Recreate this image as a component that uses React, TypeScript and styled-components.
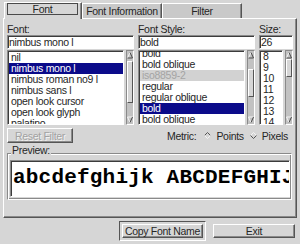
import styled, { createGlobalStyle } from 'styled-components';

const GlobalStyle = createGlobalStyle`
  html, body {
    margin: 0;
    padding: 0;
    background: #d6d6d6;
  }
  body {
    font-family: "Liberation Sans", Arial, sans-serif;
    font-size: 10.5px;
    letter-spacing: -0.3px;
    color: #262626;
  }
  * {
    box-sizing: border-box;
  }
`;

const Window = styled.div`
  width: 300px;
  height: 244px;
  display: flex;
  flex-direction: column;
  overflow: hidden;
`;

const TabBar = styled.div`
  display: flex;
  align-items: flex-end;
  height: 18px;
  padding-left: 4px;
  position: relative;
  z-index: 1;
`;

const Tab = styled.div<{ $active?: boolean; $width: number }>`
  display: flex;
  align-items: ${p => (p.$active ? 'flex-start' : 'center')};
  justify-content: center;
  width: ${p => p.$width}px;
  height: ${p => (p.$active ? 17 : 15)}px;
  margin-bottom: ${p => (p.$active ? -1 : 0)}px;
  padding: ${p => (p.$active ? '0 3px 0 2px' : '0')};
  background: ${p => (p.$active ? '#d6d6d6' : '#c9c9c9')};
  border-top: 1px solid #fff;
  border-left: 1px solid #fff;
  border-right: 1px solid #555;
  box-shadow: inset -1px 0 0 #8a8a8a;
  line-height: 12px;
  white-space: nowrap;
  overflow: hidden;
`;

const FocusBox = styled.div`
  flex: 1;
  height: 12px;
  border: 1px solid #4a4a4a;
  text-align: center;
  line-height: 10px;
`;

const Panel = styled.div`
  flex: none;
  height: 200px;
  margin: 0 3px;
  padding: 4px 3px 0 3px;
  border: 1px solid;
  border-color: #fff #555 #555 #fff;
  box-shadow: inset -1px -1px 0 #8a8a8a;
  display: flex;
  flex-direction: column;
`;

const Columns = styled.div`
  display: grid;
  grid-template-columns: 127px 117px 34px;
  column-gap: 4px;
`;

const Column = styled.div`
  display: flex;
  flex-direction: column;
`;

const Label = styled.div`
  height: 12px;
  line-height: 12px;
  white-space: nowrap;
`;

const Entry = styled.div`
  height: 14px;
  margin-bottom: 1px;
  padding: 0 1px;
  background: #fff;
  border: 1px solid;
  border-color: #8a8a8a #fff #fff #8a8a8a;
  box-shadow: inset 1px 1px 0 #3c3c3c;
  line-height: 12px;
  white-space: nowrap;
  overflow: hidden;
`;

const ListRow = styled.div`
  display: flex;
  gap: 2px;
  height: 75px;
`;

const ListView = styled.div`
  flex: 1;
  min-width: 0;
  background: #fff;
  border: 1px solid;
  border-color: #8a8a8a #fff #fff #8a8a8a;
  box-shadow: inset 1px 1px 0 #3c3c3c;
  padding: 1px 0 0 1px;
  overflow: hidden;
`;

const ListItems = styled.div<{ $offset: number }>`
  margin-top: ${p => p.$offset}px;
`;

const Item = styled.div<{ $selected?: boolean; $header?: boolean }>`
  height: 11px;
  line-height: 11px;
  padding-left: 2px;
  white-space: nowrap;
  background: ${p => (p.$selected ? '#0b0b8a' : p.$header ? '#d2d2d2' : 'transparent')};
  color: ${p => (p.$selected ? '#fff' : p.$header ? '#a4a4a4' : '#262626')};
`;

const ScrollTrack = styled.div`
  width: 8px;
  display: flex;
  flex-direction: column;
  background: #c2c2c2;
  border: 1px solid;
  border-color: #8a8a8a #fff #fff #8a8a8a;
`;

const Trough = styled.div`
  flex: 1;
`;

const Thumb = styled.div<{ $top: number; $height: number }>`
  margin-top: ${p => p.$top}px;
  height: ${p => p.$height}px;
  background: #d6d6d6;
  border: 1px solid;
  border-color: #fff #555 #555 #fff;
`;

const Arrow = styled.svg`
  display: block;
  flex: none;
  width: 6px;
  height: 8px;
`;

const ControlsRow = styled.div`
  display: flex;
  align-items: center;
  justify-content: space-between;
  height: 15px;
  margin-top: 3px;
  padding-right: 5px;
`;

const Button = styled.div<{ $disabled?: boolean; $width: number }>`
  width: ${p => p.$width}px;
  height: ${p => (p.$disabled ? 15 : 14)}px;
  display: flex;
  align-items: center;
  justify-content: center;
  background: #d6d6d6;
  border: 1px solid;
  border-color: #fff #555 #555 #fff;
  box-shadow: inset -1px -1px 0 #8a8a8a;
  color: ${p => (p.$disabled ? '#a2a2a2' : '#262626')};
  text-shadow: ${p => (p.$disabled ? '1px 1px 0 #f2f2f2' : 'none')};
  white-space: nowrap;
  overflow: hidden;
`;

const Metric = styled.div`
  display: flex;
  align-items: center;
  gap: 5px;
`;

const MetricLabel = styled.span`
  margin-right: 3px;
`;

const RadioText = styled.span`
  margin-right: 1px;
`;

const Radio = styled.svg`
  display: block;
  width: 7px;
  height: 7px;
`;

const Frame = styled.div`
  margin-top: 10px;
  margin-right: 1px;
  padding: 0 1px 2px 2px;
  border: 1px solid;
  border-color: #8a8a8a #fff #fff #8a8a8a;
  box-shadow: inset 1px 1px 0 #fff, inset -1px -1px 0 #8a8a8a;
  display: flex;
  flex-direction: column;
`;

const FrameLabel = styled.div`
  align-self: flex-start;
  margin: -10px 0 0 1px;
  padding: 0 1px;
  height: 12px;
  line-height: 12px;
  background: #d6d6d6;
`;

const PreviewBox = styled.div`
  margin-top: 4px;
  height: 37px;
  background: #fff;
  border: 1px solid;
  border-color: #8a8a8a #fff #fff #8a8a8a;
  box-shadow: inset 1px 1px 0 #3c3c3c;
  padding-left: 2px;
  overflow: hidden;
  white-space: nowrap;
  font-family: "Liberation Mono", "Courier New", monospace;
  font-weight: bold;
  font-size: 21px;
  letter-spacing: 0.2px;
  line-height: 33px;
  color: #000;
`;

const ButtonBar = styled.div`
  display: flex;
  align-items: center;
  justify-content: flex-end;
  gap: 7px;
  height: 20px;
  margin-top: 3px;
  padding-right: 5px;
`;

const DefaultFrame = styled.div`
  padding: 2px;
  border: 1px solid;
  border-color: #555 #fff #fff #555;
`;

type ListItem = { label: string; selected?: boolean; header?: boolean };

const UpArrow = () => (
  <Arrow viewBox="0 0 6 8">
    <path d="M0.5 7 L3 1.5" stroke="#f4f4f4" strokeWidth="1" fill="none" />
    <path d="M3 1.5 L5.5 7 L0.5 7" stroke="#4a4a4a" strokeWidth="1" fill="none" />
  </Arrow>
);

const DownArrow = () => (
  <Arrow viewBox="0 0 6 8">
    <path d="M0.5 1 L5.5 1 M0.5 1 L3 6.5" stroke="#f4f4f4" strokeWidth="1" fill="none" />
    <path d="M5.5 1 L3 6.5" stroke="#4a4a4a" strokeWidth="1" fill="none" />
  </Arrow>
);

const Scrollbar = ({ top, height }: { top: number; height: number }) => (
  <ScrollTrack>
    <UpArrow />
    <Trough>
      <Thumb $top={top} $height={height} />
    </Trough>
    <DownArrow />
  </ScrollTrack>
);

const ListBox = ({ items, offset, thumbTop, thumbHeight }: { items: ListItem[]; offset: number; thumbTop: number; thumbHeight: number }) => (
  <ListRow>
    <ListView>
      <ListItems $offset={offset}>
        {items.map((it, i) => (
          <Item key={i} $selected={it.selected} $header={it.header}>
            {it.label}
          </Item>
        ))}
      </ListItems>
    </ListView>
    <Scrollbar top={thumbTop} height={thumbHeight} />
  </ListRow>
);

const fonts: ListItem[] = [
  { label: 'nil' },
  { label: 'nimbus mono l', selected: true },
  { label: 'nimbus roman no9 l' },
  { label: 'nimbus sans l' },
  { label: 'open look cursor' },
  { label: 'open look glyph' },
  { label: 'palatino' },
];

const styles: ListItem[] = [
  { label: 'bold' },
  { label: 'bold oblique' },
  { label: 'iso8859-2', header: true },
  { label: 'regular' },
  { label: 'regular oblique' },
  { label: 'bold', selected: true },
  { label: 'bold oblique' },
];

const sizes: ListItem[] = ['8', '9', '10', '11', '12', '13', '14'].map(label => ({ label }));

export default function App() {
  return (
    <Window>
      <GlobalStyle />
      <TabBar>
        <Tab $active $width={78}>
          <FocusBox>Font</FocusBox>
        </Tab>
        <Tab $width={80}>Font Information</Tab>
        <Tab $width={80}>Filter</Tab>
      </TabBar>
      <Panel>
        <Columns>
          <Column>
            <Label>Font:</Label>
            <Entry>nimbus mono l</Entry>
            <ListBox items={fonts} offset={0} thumbTop={2} thumbHeight={42} />
          </Column>
          <Column>
            <Label>Font Style:</Label>
            <Entry>bold</Entry>
            <ListBox items={styles} offset={-4} thumbTop={10} thumbHeight={28} />
          </Column>
          <Column>
            <Label>Size:</Label>
            <Entry>26</Entry>
            <ListBox items={sizes} offset={-1} thumbTop={0} thumbHeight={18} />
          </Column>
        </Columns>
        <ControlsRow>
          <Button $disabled $width={66}>Reset Filter</Button>
          <Metric>
            <MetricLabel>Metric:</MetricLabel>
            <Radio viewBox="0 0 7 7">
              <path d="M0.5 3.5 L3.5 0.5 L6.5 3.5" stroke="#555" fill="none" />
              <path d="M0.5 3.5 L3.5 6.5 L6.5 3.5" stroke="#f4f4f4" fill="none" />
            </Radio>
            <RadioText>Points</RadioText>
            <Radio viewBox="0 0 7 7">
              <path d="M0.5 3.5 L3.5 0.5 L6.5 3.5" stroke="#f4f4f4" fill="none" />
              <path d="M0.5 3.5 L3.5 6.5 L6.5 3.5" stroke="#555" fill="none" />
            </Radio>
            <span>Pixels</span>
          </Metric>
        </ControlsRow>
        <Frame>
          <FrameLabel>Preview:</FrameLabel>
          <PreviewBox>abcdefghijk ABCDEFGHIJKLMNOPQRSTUVWXYZ</PreviewBox>
        </Frame>
      </Panel>
      <ButtonBar>
        <DefaultFrame>
          <Button $width={81}>Copy Font Name</Button>
        </DefaultFrame>
        <Button $width={82}>Exit</Button>
      </ButtonBar>
    </Window>
  );
}
